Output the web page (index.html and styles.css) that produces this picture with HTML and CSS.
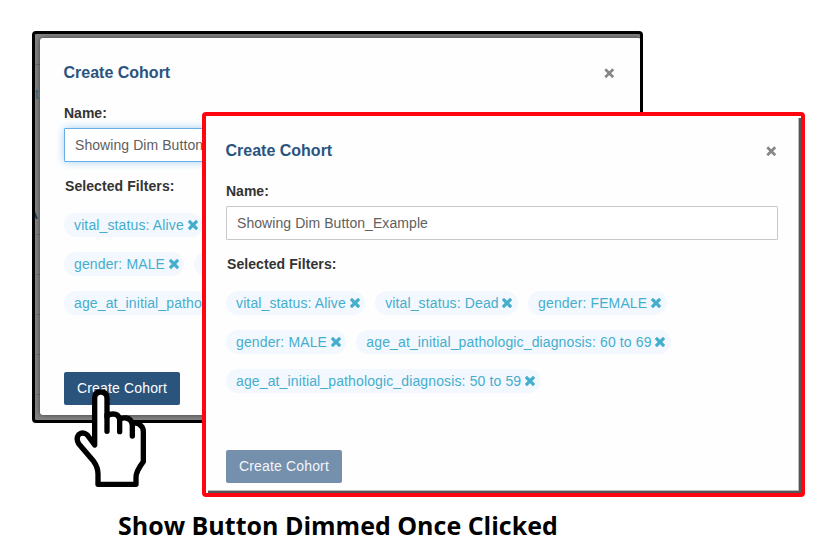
FILE: index.html
```html
<!DOCTYPE html>
<html lang="en">
<head>
<meta charset="utf-8">
<title>Create Cohort</title>
<link rel="stylesheet" href="styles.css">
</head>
<body>
<svg class="defs" width="0" height="0">
  <symbol id="times" viewBox="302 366 1188 1188"><path d="M1490 1322q0 40-28 68l-136 136q-28 28-68 28t-68-28l-294-294-294 294q-28 28-68 28t-68-28l-136-136q-28-28-28-68t28-68l294-294-294-294q-28-28-28-68t28-68l136-136q28-28 68-28t68 28l294 294 294-294q28-28 68-28t68 28l136 136q28 28 28 68t-28 68l-294 294 294 294q28 28 28 68z"/></symbol>
  <symbol id="close" viewBox="0 0 10 10"><path d="M1.2 1.2 8.8 8.8M8.8 1.2 1.2 8.8" stroke="#868686" stroke-width="2.5"/></symbol>
</svg>
<main class="stage">
  <section class="frame frame-back">
    <div class="page-edge"><span class="edge-link">ti</span><span class="edge-head">A</span></div>
    <div class="dialog">
      <header class="dialog-head"><h2>Create Cohort</h2><svg class="close"><use href="#close"/></svg></header>
      <label class="label">Name:</label>
      <div class="field field-focus">Showing Dim Button</div>
      <div class="label label-filters">Selected Filters:</div>
      <div class="chips">
        <div class="chip-row"><span class="chip">vital_status: Alive<svg><use href="#times"/></svg></span></div>
        <div class="chip-row"><span class="chip">gender: MALE<svg><use href="#times"/></svg></span><span class="chip chip-blank"></span></div>
        <div class="chip-row"><span class="chip">age_at_initial_patho</span></div>
      </div>
      <div class="button">Create Cohort</div>
    </div>
  </section>
  <section class="frame frame-front">
    <div class="dialog">
      <header class="dialog-head"><h2>Create Cohort</h2><svg class="close"><use href="#close"/></svg></header>
      <label class="label">Name:</label>
      <div class="field">Showing Dim Button_Example</div>
      <div class="label label-filters">Selected Filters:</div>
      <div class="chips">
        <div class="chip-row"><span class="chip">vital_status: Alive<svg><use href="#times"/></svg></span><span class="chip">vital_status: Dead<svg><use href="#times"/></svg></span><span class="chip">gender: FEMALE<svg><use href="#times"/></svg></span></div>
        <div class="chip-row"><span class="chip">gender: MALE<svg><use href="#times"/></svg></span><span class="chip">age_at_initial_pathologic_diagnosis: 60 to 69<svg><use href="#times"/></svg></span></div>
        <div class="chip-row"><span class="chip">age_at_initial_pathologic_diagnosis: 50 to 59<svg><use href="#times"/></svg></span></div>
      </div>
      <div class="button button-dim">Create Cohort</div>
    </div>
  </section>
  <svg class="hand" viewBox="160 171 225 306" fill="none" stroke="#000" stroke-width="16" stroke-linecap="round" stroke-linejoin="round">
    <path fill="#fff" d="M235 463V432Q235 412 222 394L177 341Q168 325 177 314Q190 304 203 315L225 345V205Q225 186 243 186Q262 186 262 205V260Q267 252 281 252Q296 252 300 268Q307 263 319 264Q334 266 338 282Q349 276 359 283Q371 291 371 305V395Q349 424 349 442V463Z"/>
    <path d="M262 255V304M300 266V305M338 280V318"/>
  </svg>
  <p class="caption">Show Button Dimmed Once Clicked</p>
</main>
</body>
</html>
```

FILE: styles.css
```css
* { box-sizing: border-box; }
body { margin: 0; background: #fff; font: 14px/20px "Liberation Sans", Arial, sans-serif; }
.defs { position: absolute; }
.stage { position: relative; width: 829px; height: 556px; overflow: hidden; }
.frame { position: absolute; overflow: hidden; border-radius: 4px; }
.frame-back {
  left: 32px; top: 31px; width: 611px; height: 392px;
  border: 3px solid #000; padding: 4px 0 0 5px;
  background:
    linear-gradient(#6e6e6e, #6e6e6e) 0 30px / 5px 1px no-repeat,
    repeating-linear-gradient(#6e6e6e 0 1px, transparent 1px 40px) 0 200px / 5px 186px no-repeat,
    #828282;
}
.frame-front {
  left: 202px; top: 112px; width: 603px; height: 385px;
  border: 4px solid #ff0512; background: #fff;
}
.frame-front::after {
  content: ""; position: absolute; inset: 2px 0 0 2px;
  border: solid #555; border-width: 0 2px 2px 0;
  box-shadow: inset -1px -1px 0 #bbb;
}
.frame-front .dialog { margin-left: -4px; }
.page-edge { position: absolute; left: 0; top: 0; width: 5px; height: 100%; overflow: hidden; }
.edge-link, .edge-head { position: absolute; left: 0; }
.edge-link { top: 50px; color: #2b626f; }
.edge-head { left: -5px; top: 171px; color: #173050; font-size: 11px; font-weight: bold; }
.dialog {
  width: 601px; height: 377px; padding: 24px 24px 10px;
  display: flex; flex-direction: column; align-items: flex-start;
  background: #fefefe; border-radius: 3px;
}
.frame-back .dialog { box-shadow: 0 0 5px #0008; }
.dialog-head { display: flex; justify-content: space-between; align-items: center; width: 552px; height: 20px; }
h2 { margin: 2px 0 0 -.5px; font-size: 16px; line-height: 20px; color: #2a547f; }
.close { width: 10.5px; height: 10.5px; margin: 2px 1.5px 0 0; }
.label { margin-top: 21px; font-weight: bold; color: #333; }
.field {
  width: 552px; height: 34px; margin-top: 5px; padding: 6px 10px;
  border: 1px solid #c8c8c8; border-radius: 1px; color: #606060; background: #fff;
  letter-spacing: .07px; white-space: nowrap;
}
.field-focus { border-color: #66afe9; box-shadow: 0 0 8px #66afe999; }
.label-filters { margin: 14px 0 0 1px; letter-spacing: .08px; }
.chips { display: flex; flex-direction: column; gap: 15px; margin-top: 17px; color: #45aecd; letter-spacing: .13px; }
.chip-row { display: flex; gap: 10px; }
.chip {
  display: flex; align-items: center; height: 24px; padding: 0 5.6px 0 10px;
  border-radius: 12px; background: #f3f8fe; white-space: nowrap;
}
.chip-blank { width: 60px; }
.chip svg { width: 10px; height: 10px; margin: 0 0 0 3.7px; fill: #45aecd; }
.button {
  height: 33px; width: 116px; margin-top: 57px; text-align: center; line-height: 32px;
  color: #fff; background: #2a547c; border-radius: 2px; letter-spacing: .15px;
}
.button-dim { background: #7590ad; color: #f3f5f8; }
.hand { position: absolute; left: 73px; top: 387px; width: 75px; height: 102px; }
.caption {
  position: absolute; left: 118px; top: 508px; margin: 0;
  font: bold 25px/34px "Open Sans", sans-serif; color: #000; white-space: nowrap;
}
```
